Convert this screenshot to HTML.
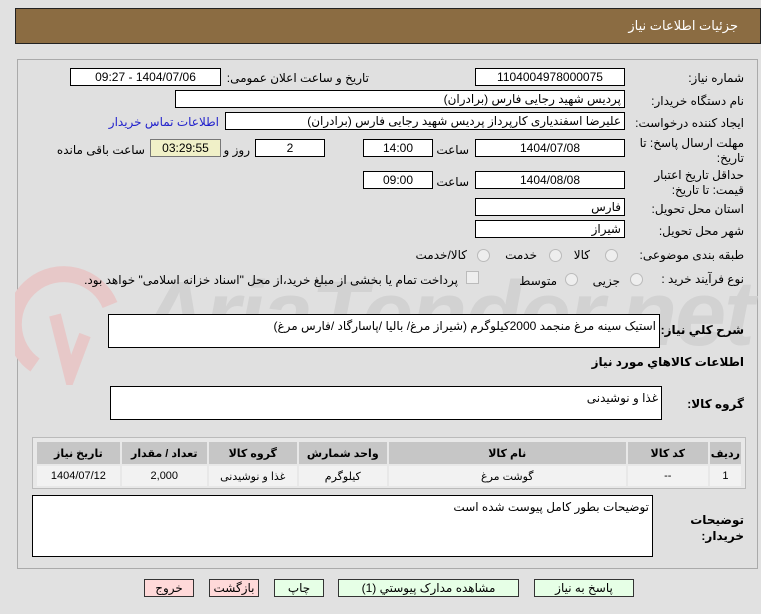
<!DOCTYPE html>
<html><head><meta charset="utf-8"><style>
body{margin:0;width:761px;height:614px;background:#e1e1e1;font-family:Tahoma,"Liberation Sans","DejaVu Sans",sans-serif;font-size:12px;color:#000;position:relative;overflow:hidden}
.a{position:absolute}
.hdr{left:15px;top:8px;width:744px;height:34px;background:#8b6c42;border:1px solid #222}
.hdr span{position:absolute;right:22px;top:9px;color:#fff;font-size:13px}
.panel{left:17px;top:59px;width:739px;height:508px;border:1px solid #aaa;background:#e0e0e0}
.in{position:absolute;background:#fff;border:1px solid #000;height:16px;line-height:16px;font-size:12px;direction:rtl;padding:0 3px;box-sizing:content-box}
.c{text-align:center}
.l{position:absolute;direction:rtl;text-align:right;white-space:nowrap;font-size:12px}
.r{right:17px}
.rad{position:absolute;width:11px;height:11px;border:1px solid #bbb;border-radius:50%;background:#eee}
.tb{left:32px;top:437px;width:712px;height:50px;border:1px solid #bbb;background:#e8e8e8}
.btn{position:absolute;top:579px;height:16px;line-height:16px;border:1px solid #333;text-align:center;background:#e6ffe6;font-size:12px;direction:rtl}
.pk{background:#ffd9d9}
.b{font-weight:bold}
.wm{left:140px;top:262px;font-size:92px;font-weight:bold;font-style:italic;color:#d2d2d2;font-family:"Liberation Sans",sans-serif;letter-spacing:-2px;white-space:nowrap}
</style></head><body>
<div class="a hdr"><span>جزئیات اطلاعات نیاز</span></div>
<div class="a panel"></div>
<div class="a wm">AriaTender.net</div>
<svg class="a" style="left:15px;top:245px" width="110" height="140"><path d="M20 120 A50 50 0 1 1 95 60" fill="none" stroke="#e7c8c8" stroke-width="16"/><path d="M40 70 L55 130 L70 90" fill="none" stroke="#e7c8c8" stroke-width="12"/></svg>

<div class="l r" style="top:71px">شماره نیاز:</div>
<div class="in c" style="left:475px;top:68px;width:142px">1104004978000075</div>
<div class="l" style="right:392px;top:71px">تاریخ و ساعت اعلان عمومی:</div>
<div class="in c" style="left:70px;top:68px;width:143px">1404/07/06 - 09:27</div>

<div class="l r" style="top:94px">نام دستگاه خریدار:</div>
<div class="in" style="left:175px;top:90px;width:442px">پردیس شهید رجایی فارس (برادران)</div>

<div class="l r" style="top:116px">ایجاد کننده درخواست:</div>
<div class="in" style="left:225px;top:112px;width:392px">علیرضا اسفندیاری کارپرداز پردیس شهید رجایی فارس (برادران)</div>
<div class="l" style="right:542px;top:115px;color:#22c">اطلاعات تماس خریدار</div>

<div class="l r" style="top:136px">مهلت ارسال پاسخ: تا</div>
<div class="l r" style="top:151px">تاریخ:</div>
<div class="in c" style="left:475px;top:139px;width:142px">1404/07/08</div>
<div class="l" style="right:292px;top:143px">ساعت</div>
<div class="in c" style="left:363px;top:139px;width:62px">14:00</div>
<div class="in c" style="left:255px;top:139px;width:62px">2</div>
<div class="l" style="right:511px;top:143px">روز و</div>
<div class="in c" style="left:150px;top:139px;width:63px;background:#f0f0c8;border-color:#777">03:29:55</div>
<div class="l" style="right:616px;top:143px">ساعت باقی مانده</div>

<div class="l r" style="top:168px">حداقل تاریخ اعتبار</div>
<div class="l r" style="top:183px">قیمت: تا تاریخ:</div>
<div class="in c" style="left:475px;top:171px;width:142px">1404/08/08</div>
<div class="l" style="right:292px;top:175px">ساعت</div>
<div class="in c" style="left:363px;top:171px;width:62px">09:00</div>

<div class="l r" style="top:202px">استان محل تحویل:</div>
<div class="in" style="left:475px;top:198px;width:142px">فارس</div>
<div class="l r" style="top:224px">شهر محل تحویل:</div>
<div class="in" style="left:475px;top:220px;width:142px">شیراز</div>

<div class="l r" style="top:248px">طبقه بندی موضوعی:</div>
<div class="rad" style="left:605px;top:249px"></div><div class="l" style="right:171px;top:248px">کالا</div>
<div class="rad" style="left:549px;top:249px"></div><div class="l" style="right:224px;top:248px">خدمت</div>
<div class="rad" style="left:477px;top:249px"></div><div class="l" style="right:294px;top:248px">کالا/خدمت</div>

<div class="l r" style="top:272px">نوع فرآیند خرید :</div>
<div class="rad" style="left:630px;top:273px"></div><div class="l" style="right:141px;top:274px">جزیی</div>
<div class="rad" style="left:565px;top:273px"></div><div class="l" style="right:204px;top:274px">متوسط</div>
<div class="a" style="left:466px;top:271px;width:11px;height:11px;border:1px solid #bbb;background:#eee"></div>
<div class="l" style="right:303px;top:273px">پرداخت تمام یا بخشی از مبلغ خرید،از محل "اسناد خزانه اسلامی" خواهد بود.</div>

<div class="l r b" style="top:323px">شرح کلي نیاز:</div>
<div class="in" style="left:108px;top:314px;width:544px;height:32px;line-height:22px">استیک سینه مرغ منجمد 2000کیلوگرم (شیراز مرغ/  بالیا /پاسارگاد /فارس مرغ)</div>
<div class="l r b" style="top:355px">اطلاعات کالاهاي مورد نیاز</div>
<div class="l r b" style="top:397px">گروه کالا:</div>
<div class="in" style="left:110px;top:386px;width:544px;height:32px;line-height:22px">غذا و نوشیدنی</div>

<div class="a tb">
<table style="position:absolute;left:2px;top:2px;width:708px;direction:rtl;font-size:11px;text-align:center;border-spacing:2px;border-collapse:separate">
<tr style="background:#c6c6c6;font-weight:bold;height:22px">
<td style="width:25px">ردیف</td><td style="width:78px">کد کالا</td><td style="width:235px">نام کالا</td><td style="width:86px">واحد شمارش</td><td style="width:86px">گروه کالا</td><td style="width:83px">تعداد / مقدار</td><td>تاریخ نیاز</td></tr>
<tr style="background:#f2f2f2;height:20px"><td>1</td><td>--</td><td>گوشت مرغ</td><td>کیلوگرم</td><td>غذا و نوشیدنی</td><td>2,000</td><td>1404/07/12</td></tr>
</table></div>

<div class="l r b" style="top:513px">توضیحات</div>
<div class="l r b" style="top:529px">خریدار:</div>
<div class="in" style="left:32px;top:495px;width:613px;height:60px;line-height:22px">توضیحات بطور کامل پیوست شده است</div>

<div class="btn" style="left:534px;width:98px">پاسخ به نیاز</div>
<div class="btn" style="left:338px;width:179px">مشاهده مدارک پیوستي (1)</div>
<div class="btn" style="left:274px;width:48px">چاپ</div>
<div class="btn pk" style="left:209px;width:48px">بازگشت</div>
<div class="btn pk" style="left:144px;width:48px">خروج</div>
</body></html>
